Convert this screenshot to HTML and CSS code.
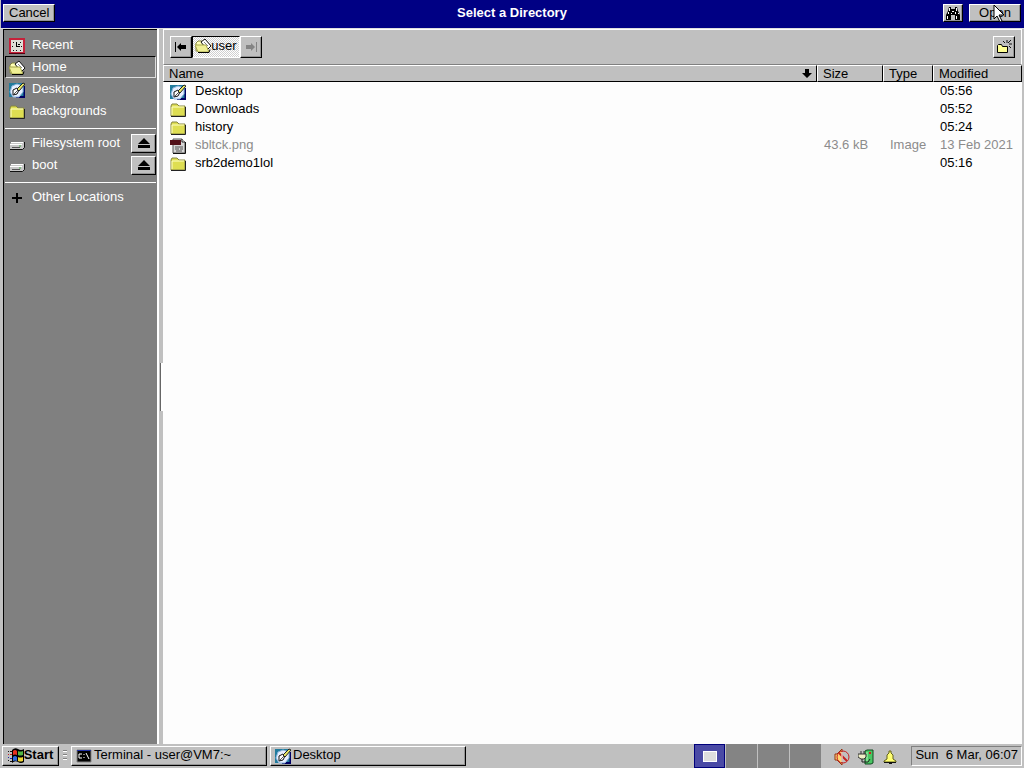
FILE: index.html
```html
<!DOCTYPE html>
<html lang="en">
<head>
  <meta charset="UTF-8">
  <meta name="viewport" content="width=device-width, initial-scale=1.0">
  <title>Select a Directory</title>
  <link rel="stylesheet" href="styles.css">
</head>
<body>
  <!-- shared icons -->
  <svg class="sprites" aria-hidden="true">
    <symbol id="folder" viewBox="0 0 16 16">
      <path d="M1 14V4l1-2h5l2 2h6v10z" fill="#dede52" stroke="#848442"/>
      <path d="M2 13V5h12" fill="none" stroke="#ffffc6"/>
      <path d="M1 14.5h14.5V5" fill="none" stroke="#222"/>
    </symbol>
    <symbol id="home" viewBox="0 0 16 16">
      <path d="M1 13V5l2-2h4l2 2v8z" fill="#ffffb5" stroke="#848442"/>
      <path d="M6 4l4-3 6 7-4 4z" fill="#fff" stroke="#111"/>
      <path d="M9 4l4 4M8 6l3 3" stroke="#848484"/>
      <path d="M0 7h11l3 7H3z" fill="#efef94" stroke="#a5a54a"/>
      <path d="M3 14.5h11l1-3" fill="none" stroke="#000"/>
    </symbol>
    <symbol id="desktop" viewBox="0 0 16 16">
      <path d="M0 1h15v14H0z" fill="#217b9c"/>
      <path d="M7 15h8.500V4" fill="none" stroke="#000063" stroke-width="2"/>
      <path d="M1 10l2-6 5-2 6 2v6l-4 5H4z" fill="#e7efff" stroke="#8cb5de"/>
      <path d="M4 8l4-2 2 2-2 4-4 1z" fill="#fff" stroke="#111"/>
      <path d="M8 7l6-6 2 1-6 7z" fill="#e7e763" stroke="#222"/>
      <path d="M5 12l4-4" stroke="#555"/>
    </symbol>
    <symbol id="drive" viewBox="0 0 16 16">
      <path d="M1 8l2-2h12v6l-2 2H1z" fill="#c6c6c6"/>
      <path d="M1 8.500h12M2 6.500h12" stroke="#fff"/>
      <path d="M3 11.500h8" stroke="#555"/>
      <path d="M1 13.500h12.500l2-2V6" fill="none" stroke="#111"/>
      <path d="M10 10h2" stroke="#4a4"/>
    </symbol>
    <symbol id="eject" viewBox="0 0 12 10">
      <path d="M6 0l6 6H0zM0 7h12v3H0z"/>
    </symbol>
  </svg>

  <main class="dialog">
    <header class="titlebar">
      <button class="btn">Cancel</button>
      <h1>Select a Directory</h1>
      <div class="actions">
        <button class="btn find" aria-label="Search">
          <svg width="16" height="14" viewBox="0 0 16 14">
            <path d="M4 1h2v2h4V1h2l1 4 2 4v5h-5V9H6v5H1V9l2-4z"/>
            <path d="M4.500 2v3M11.500 2v3M7 5.500h2M3.500 6v2M6.500 7v1M10.500 6v2M13.500 7v1M2.500 10v3M11.500 10v3" stroke="#fff"/>
          </svg>
        </button>
        <button class="btn open">Open
          <svg class="pointer" width="13" height="19" viewBox="0 0 13 19">
            <path d="M1 1v14l3-3 3 6 2-1-3-6h5z" fill="#fff" stroke="#000"/>
          </svg>
        </button>
      </div>
    </header>

    <div class="panes">
      <nav class="places">
        <ul>
          <li><a href="#recent"><svg class="icon" viewBox="0 0 16 16">
            <path d="M1 1h14v14H1z" fill="#deded6" stroke="#c6213a" stroke-width="2"/>
            <path d="M7.500 4v5M7 8.500h4M9 6.500h2" fill="none" stroke="#000"/>
            <path d="M4 4.500h1M11 4.500h1M3 8.500h1M4 12.500h1M7 12.500h1M11 12.500h1M12 8.500h1" stroke="#111"/>
            <path d="M0 15.500h16" stroke="#520010"/>
          </svg>Recent</a></li>
          <li><a class="current" href="#home"><svg class="icon"><use href="#home"/></svg>Home</a></li>
          <li><a href="#desktop"><svg class="icon"><use href="#desktop"/></svg>Desktop</a></li>
          <li><a href="#backgrounds"><svg class="icon"><use href="#folder"/></svg>backgrounds</a></li>
        </ul>
        <ul>
          <li><a href="#root"><svg class="icon"><use href="#drive"/></svg>Filesystem root</a>
            <button class="btn eject" aria-label="Eject Filesystem root"><svg width="12" height="10"><use href="#eject"/></svg></button></li>
          <li><a href="#boot"><svg class="icon"><use href="#drive"/></svg>boot</a>
            <button class="btn eject" aria-label="Eject boot"><svg width="12" height="10"><use href="#eject"/></svg></button></li>
        </ul>
        <ul>
          <li><a href="#other"><svg class="icon" viewBox="0 0 16 16"><path d="M7 3h2v4h4v2H9v4H7V9H3V7h4z"/></svg>Other Locations</a></li>
        </ul>
      </nav>

      <div class="splitter"></div>

      <section class="browser">
        <div class="toolbar">
          <div class="path">
            <button class="btn step" aria-label="Back">
              <svg width="12" height="10" viewBox="0 0 12 10"><path d="M0 0h1v10H0zM2 5l4-4v2h5v4H6v2z"/></svg>
            </button>
            <button class="btn crumb"><svg class="icon"><use href="#home"/></svg>user</button>
            <button class="btn step" aria-label="Forward" disabled>
              <svg width="12" height="10" viewBox="0 0 12 10"><path d="M11 0h1v10h-1zM10 5L6 1v2H1v4h5v2z" fill="#848484"/></svg>
            </button>
          </div>
          <button class="btn newdir" aria-label="Create Folder">
            <svg class="icon" viewBox="0 0 16 16">
              <path d="M1.500 13.500v-7l1-1h3l1 2h5v6z" fill="#ffff94" stroke="#000"/>
              <path d="M11 1v3M7 2l2 2M15 1l-3 3M13 5h3M13 7l2 2" stroke="#111"/>
            </svg>
          </button>
        </div>

        <table class="files">
          <thead>
            <tr>
              <th class="name"><button>Name <svg width="10" height="9" viewBox="0 0 10 9"><path d="M3 0h4v4h3L5 9 0 4h3z"/></svg></button></th>
              <th class="size"><button>Size</button></th>
              <th class="type"><button>Type</button></th>
              <th class="modified"><button>Modified</button></th>
            </tr>
          </thead>
          <tbody>
            <tr><td><span class="file"><svg class="icon"><use href="#desktop"/></svg>Desktop</span></td><td></td><td></td><td>05:56</td></tr>
            <tr><td><span class="file"><svg class="icon"><use href="#folder"/></svg>Downloads</span></td><td></td><td></td><td>05:52</td></tr>
            <tr><td><span class="file"><svg class="icon"><use href="#folder"/></svg>history</span></td><td></td><td></td><td>05:24</td></tr>
            <tr class="dim"><td><span class="file"><svg class="icon" viewBox="0 0 16 16">
              <path d="M3 1h9l3 3v11H3z" fill="#d6d6d6" stroke="#555"/>
              <path d="M12 1v3h3" fill="#fff" stroke="#222"/>
              <path d="M0 2h11v5H0z" fill="#521018"/>
              <path d="M5 9h8M5 11h4M10 11h3M6 13h6" stroke="#555"/>
              <path d="M3 15.500h12.500V4" fill="none" stroke="#111"/>
            </svg>sbltck.png</span></td><td>43.6 kB</td><td>Image</td><td>13 Feb 2021</td></tr>
            <tr><td><span class="file"><svg class="icon"><use href="#folder"/></svg>srb2demo1lol</span></td><td></td><td></td><td>05:16</td></tr>
          </tbody>
        </table>
      </section>
    </div>
  </main>

  <footer class="taskbar">
    <button class="btn start">
      <svg class="icon" viewBox="0 0 16 16">
        <path d="M4 2q3-3 6-1t6 0v13q-3 2-6 0t-6 1z" fill="#000"/>
        <path d="M5 3q2-2 4 0v4q-2-1-4 0z" fill="#e73121"/>
        <path d="M10 3q2 1 5 0v4q-3 1-5 0z" fill="#52b542"/>
        <path d="M5 9q2-2 4 0v4q-2-1-4 0z" fill="#316bde"/>
        <path d="M10 9q2 1 5 0v4q-3 1-5 0z" fill="#efd631"/>
        <path d="M0 3.500h1M2 3.500h2M0 12.500h1M2 13.500h2" stroke="#111"/>
        <path d="M0 6.500h1M2 6.500h2" stroke="#c22"/>
        <path d="M0 9.500h1M2 10.500h2" stroke="#22a"/>
      </svg>Start
    </button>
    <div class="grip"></div>
    <button class="btn task">
      <svg class="icon" viewBox="0 0 16 16">
        <path d="M1 2h14v12H1z" stroke="#848484"/>
        <path d="M1 2.500h14" stroke="#2131a5"/>
        <path d="M6 6H3v4h3M8 6v1M8 9v1M10 5l3 6" fill="none" stroke="#fff"/>
      </svg>Terminal - user@VM7:~
    </button>
    <button class="btn task"><svg class="icon"><use href="#desktop"/></svg>Desktop</button>

    <div class="pager">
      <button class="active" aria-label="Workspace 1"><span class="window"></span></button>
      <button aria-label="Workspace 2"></button>
      <button aria-label="Workspace 3"></button>
      <button aria-label="Workspace 4"></button>
    </div>

    <div class="tray">
      <svg class="icon" viewBox="0 0 16 16">
        <path d="M1 5h2l5-5v16l-5-5H1z" fill="#ffd673" stroke="#943110"/>
        <circle cx="9" cy="8" r="6" fill="none" stroke="#c62121"/>
        <path d="M5 4l8 8" stroke="#c62121" stroke-width="2"/>
        <path d="M8 3v10" stroke="#fff"/>
      </svg>
      <svg class="icon" viewBox="0 0 16 16">
        <path d="M7 2l2-1h6v13l-2 1H7z" fill="#4ac663" stroke="#104a21"/>
        <path d="M9 3v10" stroke="#b5f7bd"/>
        <path d="M0 5h8v3l-2 2H3L0 8z" fill="#efefc6" stroke="#333"/>
        <path d="M3 2v3M6 2v3" stroke="#333"/>
        <path d="M4 10v3h6l2-3" fill="none" stroke="#222"/>
        <path d="M11 4h2" stroke="#c22" stroke-width="2"/>
      </svg>
      <svg class="icon" viewBox="0 0 16 16">
        <path d="M7 2h2v2l2 2v4l3 2v1H2v-1l3-2V6l2-2z" fill="#ffff73" stroke="#63631a"/>
        <path d="M2 13.500h12M7 14.500h3" stroke="#111"/>
      </svg>
    </div>
    <time class="clock" datetime="2022-03-06T06:07">Sun&nbsp; 6 Mar, 06:07</time>
  </footer>
</body>
</html>
```
FILE: styles.css
```css
* {
  box-sizing: border-box;
}
body {
  display: flex;
  flex-direction: column;
  min-height: 100vh;
  margin: 0;
  background-color: #c0c0c0;
  color: #000;
  font-family: "Liberation Sans", Arial, sans-serif;
  font-size: 13px;
  line-height: 16px;
}
button {
  margin: 0;
  padding: 0;
  border: none;
  background: none;
  color: inherit;
  font: inherit;
}
.sprites {
  position: absolute;
  width: 0;
  height: 0;
}
.icon {
  flex: none;
  width: 16px;
  height: 16px;
}
.btn {
  display: flex;
  justify-content: center;
  align-items: center;
  background-color: #c0c0c0;
  border: 1px solid;
  border-color: #fff #000 #000 #fff;
  box-shadow: inset -1px -1px #949494;
}

/* dialog */
.dialog {
  flex: 1;
  display: flex;
  flex-direction: column;
}
.titlebar {
  display: grid;
  grid-template-columns: 1fr auto 1fr;
  align-items: center;
  height: 28px;
  padding: 0 3px 2px 2px;
  border-left: 1px solid #c0c0c0;
  background-color: #000084;
}
.titlebar h1 {
  margin: 0;
  color: #fff;
  font-size: 13px;
  font-weight: bold;
}
.titlebar .btn {
  justify-self: start;
  height: 18px;
  padding: 0 5px;
}
.actions {
  display: flex;
  justify-content: flex-end;
  gap: 6px;
}
.titlebar .find {
  width: 20px;
  padding: 0;
}
.titlebar .open {
  position: relative;
  width: 52px;
}
.pointer {
  position: absolute;
  top: -1px;
  left: 23px;
}
.panes {
  flex: 1;
  display: flex;
  padding: 0 2px 0 3px;
  border-top: 1px solid #dedede;
}

/* places sidebar */
.places {
  width: 154px;
  padding: 4px 1px;
  border-top: 1px solid #000;
  border-left: 1px solid #000;
  background-color: #808080;
}
.places ul {
  margin: 0;
  padding: 0;
  list-style: none;
}
.places ul + ul {
  margin-top: 6px;
  padding-top: 3px;
  border-top: 1px solid #fff;
}
.places li {
  display: flex;
  align-items: center;
  height: 22px;
}
.places a {
  flex: 1;
  display: flex;
  align-items: center;
  gap: 7px;
  height: 22px;
  padding: 0 3px 1px;
  border: 1px solid transparent;
  color: #fff;
  text-decoration: none;
  white-space: nowrap;
}
.places .icon {
  margin-top: 2px;
}
.places .current {
  border-color: #000 #dedede #dedede #000;
}
.eject {
  width: 25px;
  height: 19px;
}
.splitter {
  display: flex;
  align-items: center;
  width: 6px;
  border-left: 2px solid #fff;
}
.splitter::after {
  content: "";
  width: 2px;
  height: 48px;
  margin-left: 1px;
  border-left: 1px solid #666;
  background-color: #fff;
}

/* file browser */
.browser {
  flex: 1;
  background-color: #fdfdfd;
}
.toolbar {
  display: flex;
  justify-content: space-between;
  align-items: center;
  height: 36px;
  padding: 0 6px;
  background-color: #c0c0c0;
  border: 1px solid;
  border-color: #fff #fff #808080 #fff;
}
.path {
  display: flex;
}
.toolbar .btn {
  height: 22px;
}
.step,
.newdir {
  width: 22px;
}
.toolbar .crumb {
  width: 48px;
  padding-bottom: 2px;
  border-color: #000 #fff #fff #000;
  box-shadow: none;
  background: repeating-conic-gradient(#fff 0 25%, #d0d0d0 0 50%) 0 0 / 2px 2px;
}
.files {
  width: 100%;
  border-collapse: collapse;
  table-layout: fixed;
}
.files th {
  padding: 0;
  font-weight: normal;
}
.files .size {
  width: 66px;
}
.files .type {
  width: 50px;
}
.files .modified {
  width: 89px;
}
.files th button {
  display: flex;
  justify-content: space-between;
  align-items: center;
  width: 100%;
  height: 17px;
  padding: 0 4px 0 5px;
  border: 1px solid;
  border-color: #fff #000 #000 #fff;
  background-color: #c0c0c0;
}
.files td {
  height: 18px;
  padding: 0 0 0 7px;
  white-space: nowrap;
}
.file {
  display: flex;
  align-items: center;
  gap: 9px;
}
.file .icon {
  margin-top: 1px;
}
.dim {
  color: #8c8c8c;
}

/* taskbar */
.taskbar {
  display: flex;
  align-items: center;
  height: 24px;
  padding: 0 2px;
}
.taskbar .btn {
  height: 20px;
  padding-bottom: 2px;
}
.start {
  width: 57px;
  font-weight: bold;
}
.taskbar .icon {
  margin-top: 1px;
}
.grip {
  width: 4px;
  height: 12px;
  margin: 0 4px;
  background: repeating-linear-gradient(#808080 0 1px, #fff 1px 2px, #c0c0c0 2px 4px);
}
.task {
  flex: 0 1 196px;
  justify-content: flex-start;
  gap: 2px;
  margin-right: 3px;
  padding: 0 4px;
  white-space: nowrap;
}
.pager {
  display: flex;
  gap: 1px;
  height: 24px;
  margin-left: auto;
  background-color: #c0c0c0;
}
.pager button {
  display: flex;
  justify-content: center;
  align-items: center;
  width: 31px;
  background-color: #848484;
}
.pager .active {
  background-color: #4a4aa5;
  border: 1px solid #00007b;
}
.window {
  width: 14px;
  height: 11px;
  background-color: #dedede;
  border: 1px solid #fff;
}
.tray {
  display: flex;
  gap: 8px;
  margin: 0 13px;
}
.clock {
  height: 20px;
  padding: 0 3px;
  border: 1px solid;
  border-color: #808080 #fff #fff #808080;
  white-space: nowrap;
}
```
